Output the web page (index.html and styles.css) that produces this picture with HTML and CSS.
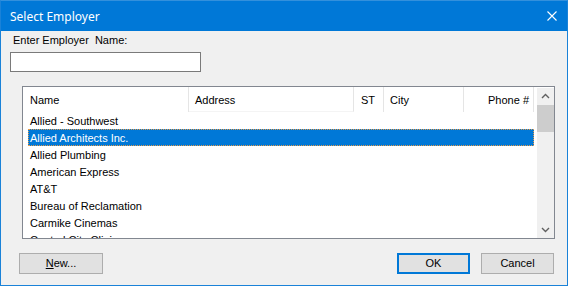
FILE: index.html
```html
<!DOCTYPE html>
<html>
<head>
<meta charset="utf-8">
<link rel="stylesheet" href="styles.css">
</head>
<body>
<div class="window">
  <div class="titlebar">
    <span class="title">Select Employer</span>
    <svg class="close" width="10" height="10" viewBox="0 0 10 10"><path d="M0.5 0.5 L9.5 9.5 M9.5 0.5 L0.5 9.5" stroke="#fff" stroke-width="1.1" fill="none"/></svg>
  </div>
  <div class="content">
    <div class="label">Enter Employer&nbsp; Name:</div>
    <div class="input"></div>
    <div class="listbox">
      <div class="listmain">
        <div class="header">
          <div class="hcol c-name">Name</div>
          <div class="hcol c-addr">Address</div>
          <div class="hcol c-st">ST</div>
          <div class="hcol c-city">City</div>
          <div class="hcol c-phone">Phone #</div>
        </div>
        <div class="rows">
          <div class="row">Allied - Southwest</div>
          <div class="row sel">Allied Architects Inc.</div>
          <div class="row">Allied Plumbing</div>
          <div class="row">American Express</div>
          <div class="row">AT&amp;T</div>
          <div class="row">Bureau of Reclamation</div>
          <div class="row">Carmike Cinemas</div>
          <div class="row">Central City Clinic</div>
        </div>
      </div>
      <div class="scrollbar">
        <svg class="arrow" width="17" height="17" viewBox="0 0 17 17"><path d="M5 10 L8.5 6.5 L12 10" stroke="#606060" stroke-width="1.4" fill="none"/></svg>
        <div class="thumb"></div>
        <div class="track"></div>
        <svg class="arrow" width="17" height="17" viewBox="0 0 17 17"><path d="M5 7 L8.5 10.5 L12 7" stroke="#606060" stroke-width="1.4" fill="none"/></svg>
      </div>
    </div>
    <div class="buttons">
      <div class="btn"><span class="u">N</span>ew...</div>
      <div class="spacer"></div>
      <div class="btn default">OK</div>
      <div class="btn">Cancel</div>
    </div>
  </div>
</div>
</body>
</html>
```

FILE: styles.css
```css
html, body {
  margin: 0;
  padding: 0;
  background: #f0f0f0;
}
.window {
  width: 568px;
  height: 286px;
  box-sizing: border-box;
  border: 1px solid #1a82d8;
  border-top-color: #3390dc;
  background: #f0f0f0;
  display: flex;
  flex-direction: column;
  font-family: "Liberation Sans", Arial, sans-serif;
  font-size: 11px;
  color: #000;
}
.titlebar {
  height: 30px;
  flex: none;
  background: #0078d7;
  display: flex;
  align-items: center;
  padding: 0 10px 0 9px;
  color: #fff;
}
.title {
  font-family: "Noto Sans", "Open Sans", sans-serif;
  font-size: 12px;
  flex: 1;
}
.close {
  display: block;
}
.content {
  display: flex;
  flex-direction: column;
  padding: 3px 13px 0 9px;
}
.label {
  padding-left: 3px;
  height: 13px;
  line-height: 13px;
}
.input {
  margin-top: 5px;
  width: 191px;
  height: 20px;
  box-sizing: border-box;
  border: 1px solid #7a7a7a;
  background: #fff;
}
.listbox {
  margin-top: 14px;
  margin-left: 12px;
  width: 533px;
  height: 153px;
  box-sizing: border-box;
  border: 1px solid #828790;
  background: #fff;
  display: flex;
  overflow: hidden;
}
.listmain {
  width: 513px;
  padding-left: 5px;
  display: flex;
  flex-direction: column;
  overflow: hidden;
}
.header {
  display: flex;
  height: 25px;
  flex: none;
}
.hcol {
  box-sizing: border-box;
  border-right: 1px solid #e5e5e5;
  height: 25px;
  line-height: 27px;
  padding-left: 2px;
  white-space: nowrap;
}
.c-name { width: 161px; }
.c-addr { width: 165px; padding-left: 6px; border-bottom: 1px solid #f4f4f4; line-height: 26px; }
.c-st { width: 30px; padding-left: 7px; }
.c-city { width: 80px; padding-left: 6px; }
.c-phone { width: 70px; text-align: right; padding-right: 4px; }
.rows {
  display: flex;
  flex-direction: column;
}
.row {
  height: 17px;
  line-height: 18px;
  padding-left: 2px;
  width: 506px;
  box-sizing: border-box;
  white-space: nowrap;
  flex: none;
}
.row.sel {
  background: #0078d7;
  color: #fff;
  border: 1px dotted #e39a4a;
  line-height: 16px;
  padding-left: 1px;
}
.scrollbar {
  width: 17px;
  margin-left: 3px;
  background: #f0f0f0;
  display: flex;
  flex-direction: column;
  margin-top: 1px;
}
.arrow {
  display: block;
  flex: none;
}
.thumb {
  height: 27px;
  background: #cdcdcd;
  flex: none;
}
.track {
  flex: 1;
}
.buttons {
  display: flex;
  margin-top: 14px;
  padding-left: 9px;
  gap: 11px;
}
.spacer {
  flex: 1;
}
.btn {
  box-sizing: border-box;
  height: 21px;
  width: 73px;
  border: 1px solid #adadad;
  background: #e1e1e1;
  text-align: center;
  line-height: 19px;
}
.btn:first-child {
  width: 84px;
}
.btn.default {
  border: 2px solid #0078d7;
  line-height: 17px;
}
.u {
  text-decoration: underline;
}
```
